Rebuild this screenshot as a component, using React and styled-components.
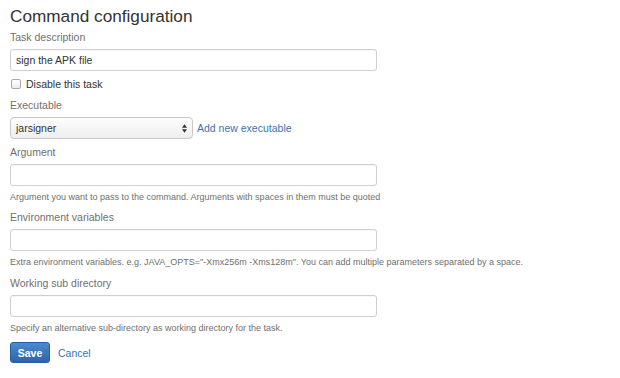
import React from "react"
import styled, { createGlobalStyle } from "styled-components"

const GlobalStyle = createGlobalStyle`
  body {
    margin: 0;
    background: #fff;
    font-family: "Liberation Sans", Arial, sans-serif;
    color: #333;
  }
`

const Form = styled.form`
  padding: 0 10px;
  width: 620px;
  box-sizing: border-box;
`

const Title = styled.h2`
  margin: 6px 0 3px;
  font-size: 17.2px;
  line-height: 20px;
  font-weight: normal;
  color: #333;
`

const Group = styled.div`
  margin-top: ${(p) => p.$top || 0}px;
`

const Label = styled.label`
  display: block;
  font-size: 10.5px;
  line-height: 16px;
  color: #707070;
  margin-bottom: 4px;
`

const TextInput = styled.input`
  display: block;
  box-sizing: border-box;
  width: 367px;
  height: 22px;
  margin: 0;
  padding: 0 5px;
  border: 1px solid #cfcfcf;
  border-radius: 3px;
  font-family: inherit;
  font-size: 10.5px;
  color: #333;
  background: #fff;
  box-shadow: inset 0 1px 1px rgba(0, 0, 0, 0.04);
  outline: none;
`

const Help = styled.div`
  margin-top: 5px;
  font-size: 9px;
  line-height: 12px;
  color: #6f6f6f;
`

const CheckRow = styled.label`
  display: flex;
  align-items: center;
  gap: 5px;
  height: 14px;
  margin-top: 6px;
  font-size: 10.5px;
  color: #333;
`

const CheckBox = styled.span`
  width: 8px;
  height: 8px;
  margin-left: 1px;
  border: 1px solid #a9a9a9;
  border-radius: 2px;
  background: linear-gradient(#fff, #ececec);
`

const SelectRow = styled.div`
  display: flex;
  align-items: center;
  gap: 4px;
`

const SelectBox = styled.div`
  display: flex;
  align-items: center;
  justify-content: space-between;
  box-sizing: border-box;
  width: 183px;
  height: 22px;
  padding: 0 5px;
  border: 1px solid #c8c8c8;
  border-radius: 4px;
  background: linear-gradient(#fdfdfd, #eeeeee);
  font-size: 10.5px;
  color: #333;
`

const Link = styled.a`
  font-size: 10.5px;
  color: #3b73af;
  text-decoration: none;
`

const Buttons = styled.div`
  display: flex;
  align-items: center;
  gap: 8px;
  margin-top: 8px;
`

const SaveButton = styled.button`
  box-sizing: border-box;
  width: 40px;
  height: 21px;
  padding: 0;
  border: 1px solid #2a5d9e;
  border-radius: 3px;
  background: linear-gradient(#4d8ad0, #2b64ab);
  color: #fff;
  font-family: inherit;
  font-size: 10.5px;
  font-weight: bold;
`

const Arrows = () => (
  <svg width="5" height="9" viewBox="0 0 6 10">
    <path d="M3 0 L6 4 H0 Z M3 10 L6 6 H0 Z" fill="#333" />
  </svg>
)

const App = () => {
  return (
    <>
      <GlobalStyle />
      <Form onSubmit={(e) => e.preventDefault()}>
        <Title>Command configuration</Title>
        <Group>
          <Label>Task description</Label>
          <TextInput defaultValue="sign the APK file" />
        </Group>
        <CheckRow>
          <CheckBox />
          Disable this task
        </CheckRow>
        <Group $top={6}>
          <Label>Executable</Label>
          <SelectRow>
            <SelectBox>
              jarsigner
              <Arrows />
            </SelectBox>
            <Link href="#">Add new executable</Link>
          </SelectRow>
        </Group>
        <Group $top={5}>
          <Label>Argument</Label>
          <TextInput />
          <Help>Argument you want to pass to the command. Arguments with spaces in them must be quoted</Help>
        </Group>
        <Group $top={6}>
          <Label>Environment variables</Label>
          <TextInput />
          <Help>Extra environment variables. e.g. JAVA_OPTS="-Xmx256m -Xms128m". You can add multiple parameters separated by a space.</Help>
        </Group>
        <Group $top={7}>
          <Label>Working sub directory</Label>
          <TextInput />
          <Help>Specify an alternative sub-directory as working directory for the task.</Help>
        </Group>
        <Buttons>
          <SaveButton type="submit">Save</SaveButton>
          <Link href="#">Cancel</Link>
        </Buttons>
      </Form>
    </>
  )
}

export default App
